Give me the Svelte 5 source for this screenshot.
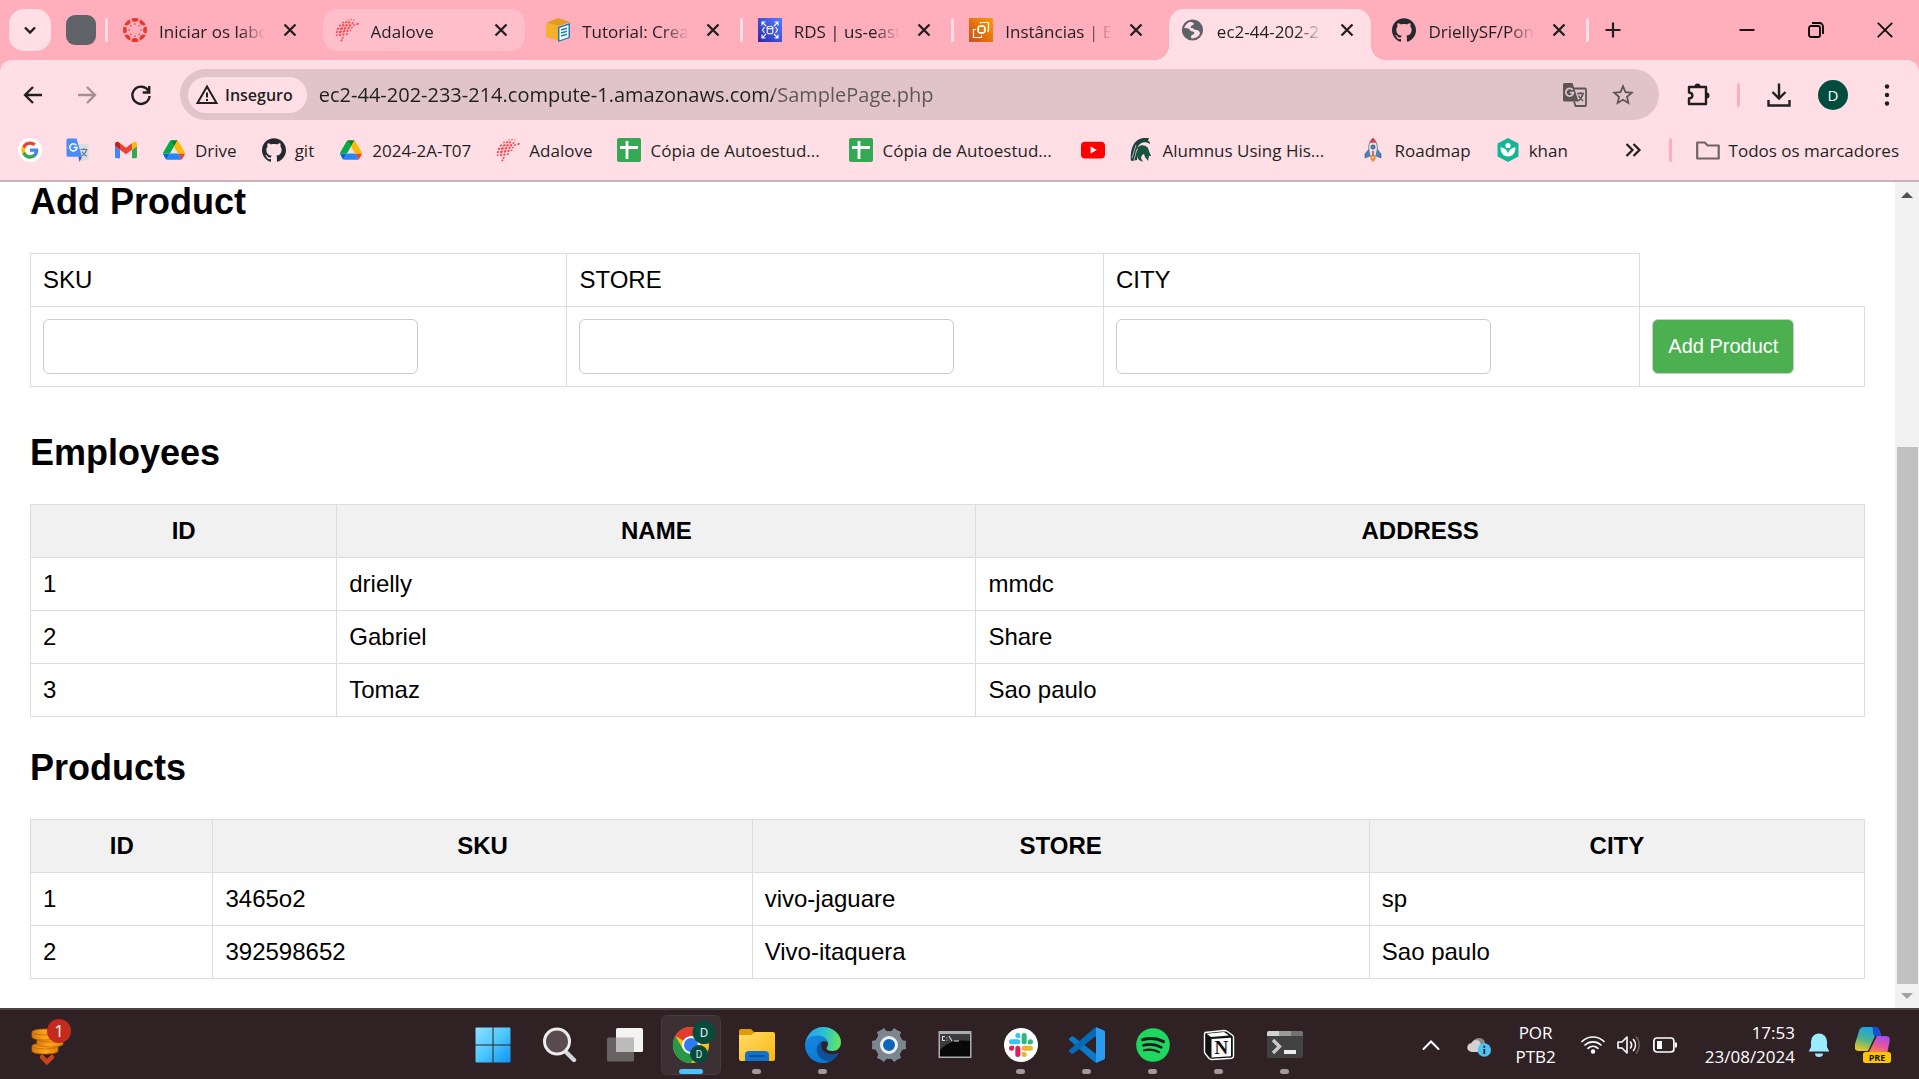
<script>
  const tabs = [
    { icon: 'canvas', title: 'Iniciar os labo' },
    { icon: 'adalove', title: 'Adalove', hover: true },
    { icon: 'tutorial', title: 'Tutorial: Crea', divider: true },
    { icon: 'rds', title: 'RDS | us-east', divider: true },
    { icon: 'ec2', title: 'Instâncias | EC' },
    { icon: 'globe', title: 'ec2-44-202-2', active: true },
    { icon: 'github', title: 'DriellySF/Pon', divider: true }
  ];

  const bookmarks = [
    { icon: 'google', label: 'Google', bare: true },
    { icon: 'translate', label: 'Google Tradutor', bare: true },
    { icon: 'gmail', label: 'Gmail', bare: true },
    { icon: 'drive', label: 'Drive' },
    { icon: 'github', label: 'git' },
    { icon: 'drive', label: '2024-2A-T07' },
    { icon: 'adalove', label: 'Adalove' },
    { icon: 'sheets', label: 'Cópia de Autoestud...', long: true },
    { icon: 'sheets', label: 'Cópia de Autoestud...', long: true },
    { icon: 'youtube', label: 'YouTube', bare: true },
    { icon: 'spartan', label: 'Alumnus Using His...', long: true },
    { icon: 'rocket', label: 'Roadmap' },
    { icon: 'khan', label: 'khan' }
  ];

  const employees = [
    [1, 'drielly', 'mmdc'],
    [2, 'Gabriel', 'Share'],
    [3, 'Tomaz', 'Sao paulo']
  ];

  const products = [
    [1, '3465o2', 'vivo-jaguare', 'sp'],
    [2, '392598652', 'Vivo-itaquera', 'Sao paulo']
  ];

  const apps = [
    { icon: 'windows', label: 'Iniciar' },
    { icon: 'search', label: 'Pesquisar' },
    { icon: 'taskview', label: 'Visão de tarefas' },
    { icon: 'chrome', label: 'Google Chrome', current: true },
    { icon: 'folder', label: 'Explorador de Arquivos', open: true },
    { icon: 'edge', label: 'Microsoft Edge', open: true },
    { icon: 'settings', label: 'Configurações' },
    { icon: 'cmd', label: 'Prompt de Comando' },
    { icon: 'slack', label: 'Slack', open: true },
    { icon: 'vscode', label: 'Visual Studio Code', open: true },
    { icon: 'spotify', label: 'Spotify', open: true },
    { icon: 'notion', label: 'Notion', open: true },
    { icon: 'terminal', label: 'Terminal', open: true }
  ];

  const fields = ['SKU', 'STORE', 'CITY'];
  const spokes = [0, 45, 90, 135, 180, 225, 270, 315];
  const cogs = [0, 60, 120, 180, 240, 300];
  // Rows of the Adalove mark: [x, y, radius]
  const dots = [
    [13, 2, 0.8], [16, 1.5, 0.9], [19, 2, 0.8],
    [8, 4.5, 1.2], [11, 4.2, 1.4], [14, 4.4, 1.5], [17.5, 5, 1.3], [22.5, 6, 1.5],
    [5, 7.5, 1.4], [8.2, 7.4, 1.6], [11.5, 7.4, 1.7], [15, 7.4, 1.6], [19, 7, 1.2],
    [3, 10.8, 1.5], [6.4, 10.6, 1.8], [10, 10.3, 1.7], [13.6, 10, 1.5], [17, 9.6, 1.1],
    [2, 14, 1.5], [5.4, 13.9, 1.8], [9, 13.4, 1.7], [12.4, 12.8, 1.5], [15.6, 12.4, 1.1],
    [1.8, 17.2, 1.2], [5, 17, 1.5], [8.4, 16.6, 1.5], [12, 16, 1.3],
    [7.6, 19.8, 1.3], [6.4, 22.4, 1.3]
  ];
</script>

{#snippet glyph(name)}
  {#if name === 'canvas'}
    <svg viewBox="0 0 24 24" aria-hidden="true">
      {#each spokes as angle}
        <g transform="rotate({angle} 12 12)" fill="#e8392b">
          <path d="M8.400 .6a12 12 0 0 1 7.200 0a3.600 3.300 0 0 1-7.200 0z" />
          <circle cx="12" cy="6" r=".8" />
        </g>
      {/each}
    </svg>
  {:else if name === 'adalove'}
    <svg viewBox="0 0 24 24" aria-hidden="true">
      {#each dots as [x, y, r]}
        <ellipse cx={x} cy={y} rx={r * 0.9} ry={r * 0.68} fill="#f9484f" transform="rotate(-35 {x} {y})" />
      {/each}
    </svg>
  {:else if name === 'tutorial'}
    <svg viewBox="0 0 24 24" aria-hidden="true">
      <path d="M0 5 12 0l12 4-11 4z" fill="#e39b1f" />
      <path d="M0 5l13 3v15L0 19z" fill="#f2b02c" />
      <path d="M12 9l12-4v15l-12 4z" fill="#1a7fb8" />
      <path d="M13.500 10l9-3v12.200l-9 3z" fill="#fff" />
      <path d="M15 12l6-1.800M15 15l6-1.800M15 18l6-1.800" stroke="#1a7fb8" stroke-width="1.500" />
    </svg>
  {:else if name === 'rds'}
    <svg viewBox="0 0 24 24" aria-hidden="true">
      <defs><linearGradient id="rds" x1="0" y1="1" x2="1" y2="0"><stop stop-color="#2e27ad" /><stop offset="1" stop-color="#527fff" /></linearGradient></defs>
      <path d="M0 0h24v24H0z" fill="url(#rds)" />
      <g fill="none" stroke="#fff" stroke-width="1.100">
        <path d="M4 7.500V4h3.500M4 4l4 4M20 7.500V4h-3.500M20 4l-4 4M4 16.500V20h3.500M4 20l4-4M20 16.500V20h-3.500M20 20l-4-4" />
        <ellipse cx="12" cy="9.500" rx="2.800" ry="1.200" />
        <path d="M9.200 9.500v5c0 1.600 5.600 1.600 5.600 0v-5M6.500 9l-2 3 2 3M17.500 9l2 3-2 3" />
      </g>
    </svg>
  {:else if name === 'ec2'}
    <svg viewBox="0 0 24 24" aria-hidden="true">
      <defs><linearGradient id="ec2" x1="0" y1="1" x2="1" y2="0"><stop stop-color="#c8511b" /><stop offset="1" stop-color="#f90" /></linearGradient></defs>
      <path d="M0 0h24v24H0z" fill="url(#ec2)" />
      <g fill="none" stroke="#fff" stroke-width="1.200">
        <path d="M9.500 8.500h6v6h-6zM11 8.500V7M12.500 8.500V7M14 8.500V7M11 16v-1.500M12.500 16v-1.500M14 16v-1.500M9.500 10H8M9.500 11.500H8M9.500 13H8M17 10h-1.500M17 11.500h-1.500M17 13h-1.500" />
        <path d="M11.500 5.500V4.500h8V13H18M7 11.500H4.500v8h8V17.500" />
      </g>
    </svg>
  {:else if name === 'globe'}
    <svg viewBox="0 0 24 24" aria-hidden="true">
      <circle cx="11.500" cy="12" r="9.500" fill="#ffdfe5" stroke="#5f6368" stroke-width="2.200" />
      <path d="M3 10c2 0 5 0 6 2s3 1 4 2-1 3-2 3-1 3-1 4.500C5 21 1 16 2 10zM9 2.500C12 1.500 18 2 20.500 8c1 3 0 6-1 8-1-2-1.500-4-4-4s-3-2-5-2 0-3 1-3 2-1 1-2-3 0-3.500-2.500z" fill="#5f6368" />
    </svg>
  {:else if name === 'github'}
    <svg viewBox="0 0 24 24" aria-hidden="true">
      <path fill="#24292f" d="M12 .297c-6.630 0-12 5.373-12 12 0 5.303 3.438 9.800 8.205 11.385.6.113.82-.258.82-.577 0-.285-.01-1.040-.015-2.040-3.338.724-4.042-1.610-4.042-1.610C4.422 18.070 3.633 17.700 3.633 17.700c-1.087-.744.084-.729.084-.729 1.205.084 1.838 1.236 1.838 1.236 1.070 1.835 2.809 1.305 3.495.998.108-.776.417-1.305.76-1.605-2.665-.3-5.466-1.332-5.466-5.930 0-1.310.465-2.380 1.235-3.220-.135-.303-.54-1.523.105-3.176 0 0 1.005-.322 3.300 1.230.96-.267 1.980-.399 3-.405 1.020.006 2.040.138 3 .405 2.280-1.552 3.285-1.230 3.285-1.230.645 1.653.24 2.873.12 3.176.765.84 1.230 1.910 1.230 3.220 0 4.610-2.805 5.625-5.475 5.920.42.36.81 1.096.81 2.220 0 1.606-.015 2.896-.015 3.286 0 .315.21.69.825.57C20.565 22.092 24 17.592 24 12.297c0-6.627-5.373-12-12-12" />
    </svg>
  {:else if name === 'google'}
    <svg viewBox="0 0 24 24" aria-hidden="true">
      <circle cx="12" cy="12" r="12" fill="#fff" />
      <g transform="translate(2.600 2.600) scale(.785)">
        <path fill="#4285f4" d="M22.560 12.250c0-.78-.07-1.530-.2-2.250H12v4.260h5.920c-.26 1.370-1.040 2.530-2.210 3.310v2.770h3.570c2.080-1.920 3.280-4.740 3.280-8.090z" />
        <path fill="#34a853" d="M12 23c2.970 0 5.460-.98 7.280-2.660l-3.570-2.770c-.98.66-2.230 1.060-3.710 1.060-2.860 0-5.290-1.930-6.160-4.530H2.180v2.840C3.990 20.530 7.700 23 12 23z" />
        <path fill="#fbbc05" d="M5.840 14.090c-.22-.66-.35-1.360-.35-2.090s.13-1.430.35-2.090V7.070H2.180C1.430 8.550 1 10.220 1 12s.43 3.450 1.180 4.930l3.660-2.840z" />
        <path fill="#ea4335" d="M12 5.380c1.620 0 3.060.56 4.210 1.640l3.150-3.150C17.450 2.090 14.970 1 12 1 7.700 1 3.990 3.470 2.180 7.070l3.660 2.840c.87-2.600 3.300-4.530 6.160-4.530z" />
      </g>
    </svg>
  {:else if name === 'translate'}
    <svg viewBox="0 0 24 24" aria-hidden="true">
      <path d="M9 6h12a1.500 1.500 0 0 1 1.500 1.500V21a1.500 1.500 0 0 1-1.500 1.500h-7z" fill="#dadce0" />
      <path d="M12.500 18.500h3.500L13.500 24z" fill="#3a57b5" />
      <path d="M2 .5h8.500L16 18.800H2A1.500 1.500 0 0 1 .5 17.300V2A1.500 1.500 0 0 1 2 .5z" fill="#4a8cf7" />
      <path d="M10.300 7.200A3.600 3.600 0 1 0 11 9.600H7.600" fill="none" stroke="#fff" stroke-width="1.500" />
      <path d="M14.500 11.500h7M18 10v1.500M20.500 11.500c-.6 3-2.500 5-4.500 6.200M16 13.500c1 2 2.600 3.600 4.600 4.600" fill="none" stroke="#5f7d8e" stroke-width="1.200" />
    </svg>
  {:else if name === 'gmail'}
    <svg viewBox="48 27 96 96" aria-hidden="true">
      <path fill="#4285f4" d="M58 108h14V74L52 59v43c0 3.320 2.690 6 6 6" />
      <path fill="#34a853" d="M120 108h14c3.320 0 6-2.690 6-6V59l-20 15" />
      <path fill="#fbbc04" d="M120 48v26l20-15v-8c0-7.420-8.470-11.650-14.400-7.200" />
      <path fill="#ea4335" d="M72 74V48l24 18 24-18v26L96 92" />
      <path fill="#c5221f" d="M52 51v8l20 15V48l-5.600-4.200c-5.940-4.450-14.400-.22-14.400 7.200" />
    </svg>
  {:else if name === 'drive'}
    <svg viewBox="-4 -8.500 95.300 95.300" aria-hidden="true">
      <path fill="#0066da" d="m6.600 66.850 3.850 6.650c.8 1.400 1.950 2.500 3.300 3.300l13.750-23.800h-27.500c0 1.550.4 3.100 1.200 4.500z" />
      <path fill="#00ac47" d="m43.650 25-13.750-23.800c-1.350.8-2.500 1.900-3.300 3.300l-25.400 44a9.060 9.060 0 0 0-1.200 4.500h27.500z" />
      <path fill="#ea4335" d="m73.550 76.800c1.350-.8 2.500-1.900 3.300-3.300l1.600-2.750 7.650-13.250c.8-1.400 1.200-2.950 1.200-4.500h-27.502l5.852 11.500z" />
      <path fill="#00832d" d="m43.650 25 13.750-23.800c-1.350-.8-2.900-1.200-4.500-1.200h-18.500c-1.600 0-3.150.45-4.500 1.200z" />
      <path fill="#2684fc" d="m59.800 53h-32.300l-13.750 23.800c1.350.8 2.900 1.200 4.500 1.200h50.800c1.600 0 3.150-.45 4.500-1.200z" />
      <path fill="#ffba00" d="m73.400 26.500-12.700-22c-.8-1.400-1.950-2.500-3.300-3.300l-13.750 23.800 16.150 28h27.450c0-1.550-.4-3.100-1.200-4.500z" />
    </svg>
  {:else if name === 'sheets'}
    <svg viewBox="0 0 24 24" aria-hidden="true">
      <rect width="24" height="24" rx="2" fill="#34a853" />
      <path d="M3 9.500h18M10 3v18" stroke="#fff" stroke-width="2.800" />
    </svg>
  {:else if name === 'youtube'}
    <svg viewBox="0 0 24 24" aria-hidden="true">
      <rect y="3.800" width="24" height="16.600" rx="4" fill="#f00" />
      <path d="M9.600 8.600v7l6.200-3.500z" fill="#fff" />
    </svg>
  {:else if name === 'spartan'}
    <svg viewBox="0 0 24 24" aria-hidden="true">
      <path d="M2 23C1 12 4 1 15 0h5l-1 3c2 1 2 1 2 3-4-3-9-2-11 1-2 2-2 4-1 7l-1 8z" fill="#18453b" />
      <path d="M9 9c3-3 8-2 10 1l1 3 2 5-2 0-1 5-3-4-1-3-2 1-1 3 2 4-4-2c-3-4-2-9-1-13z" fill="#18543f" />
      <path d="M3 20 7 7M5 22l3-11" stroke="#ffdfe5" stroke-width=".7" />
    </svg>
  {:else if name === 'rocket'}
    <svg viewBox="0 0 24 24" aria-hidden="true">
      <path d="M8 11l-4 5v4l5-2zM16 11l4 5v4l-5-2z" fill="#3b88c9" stroke="#42506a" stroke-width=".6" />
      <path d="M12 0c4 4 5 8 4 13l-1 5H9l-1-5C7 8 8 4 12 0z" fill="#dfe5ec" stroke="#5d6a80" stroke-width=".8" />
      <path d="M12 0c1.700 1.600 2.700 3.200 3.300 4.800H8.700C9.300 3.200 10.300 1.600 12 0z" fill="#d9433c" />
      <circle cx="12" cy="9" r="2" fill="#5a86b5" stroke="#42506a" stroke-width="1" />
      <path d="M11.200 13h1.600v5h-1.600z" fill="#d9433c" />
      <path d="M9.500 18.500h5c.5 2-1 4-2.500 5.500-1.500-1.500-3-3.500-2.500-5.500z" fill="#f47b2a" />
      <path d="M11 18.500h2c.2 1.400-.3 2.200-1 3-.7-.8-1.200-1.600-1-3z" fill="#ffd54a" />
    </svg>
  {:else if name === 'khan'}
    <svg viewBox="0 0 24 24" aria-hidden="true">
      <path d="M12 0 22.500 5.500v13L12 24 1.500 18.500v-13z" fill="#14b795" />
      <circle cx="12" cy="7.500" r="2.600" fill="#fff" />
      <path d="M4.500 9.500c4 0 6.500 2.500 7.500 6 1-3.500 3.500-6 7.500-6 0 6-3.500 9-7.500 9s-7.500-3-7.500-9z" fill="#fff" />
    </svg>
  {:else if name === 'windows'}
    <svg viewBox="0 0 36 36" aria-hidden="true">
      <defs><linearGradient id="win" x1="0" y1="0" x2="1" y2="1"><stop stop-color="#90e1ff" /><stop offset=".5" stop-color="#4cc7fc" /><stop offset="1" stop-color="#0a93f5" /></linearGradient></defs>
      <path fill="url(#win)" d="M1.500 .5H17.500v17H.5v-16a1 1 0 0 1 1-1zM18.500 .5h16a1 1 0 0 1 1 1v16h-17zM.5 18.500h17v17h-16a1 1 0 0 1-1-1zM18.500 18.500h17v16a1 1 0 0 1-1 1h-16z" />
    </svg>
  {:else if name === 'search'}
    <svg viewBox="0 0 36 36" aria-hidden="true">
      <path d="M25 25l8 8" stroke="#d6d6da" stroke-width="4.400" stroke-linecap="round" />
      <circle cx="16" cy="14.500" r="12.500" fill="#594b50" stroke="#ededee" stroke-width="3" />
    </svg>
  {:else if name === 'taskview'}
    <svg viewBox="0 0 36 36" aria-hidden="true">
      <rect y="10.500" width="27" height="24" rx="1.500" fill="#686263" />
      <rect x="9" y="1" width="27" height="24" rx="1.500" fill="#f3f3f3" />
      <path d="M9 10.500h18V25H10.500A1.500 1.500 0 0 1 9 23.500z" fill="#bcbabb" />
    </svg>
  {:else if name === 'chrome'}
    <svg viewBox="0 0 48 48" aria-hidden="true">
      <circle cx="24" cy="24" r="18" fill="#fbc116" />
      <path d="M24 24 8.400 15A18 18 0 0 1 39.600 15H24z" fill="#e33b2e" />
      <path d="M8.400 15A18 18 0 0 0 24 42l7.800-13.500L24 24l-7.800 4.500z" fill="#279847" />
      <circle cx="24" cy="24" r="9" fill="#fff" /><circle cx="24" cy="24" r="7" fill="#2f7cf0" />
      <circle cx="37" cy="11.500" r="11.500" fill="#064c3e" />
      <text x="37" y="16" text-anchor="middle" class="badge-text" font-size="13">D</text>
      <circle cx="32" cy="33" r="9" fill="#064c3e" />
      <text x="32" y="37" text-anchor="middle" class="badge-text" font-size="10">D</text>
    </svg>
  {:else if name === 'folder'}
    <svg viewBox="0 0 36 36" aria-hidden="true">
      <defs><linearGradient id="fold" x1="0" y1="0" x2="1" y2="1"><stop stop-color="#ffdc68" /><stop offset="1" stop-color="#fbb70f" /></linearGradient></defs>
      <path d="M0 4a2 2 0 0 1 2-2h10l4 4v8H0z" fill="#dd9b05" />
      <path d="M0 8h12l4-3h18a2 2 0 0 1 2 2v25a2 2 0 0 1-2 2H2a2 2 0 0 1-2-2z" fill="url(#fold)" />
      <path d="M6 34v-6a4 4 0 0 1 4-4h16a4 4 0 0 1 4 4v6z" fill="#1272cb" />
      <path d="M11 29h14" stroke="#08468c" stroke-width="1.500" stroke-linecap="round" />
    </svg>
  {:else if name === 'edge'}
    <svg viewBox="0 0 36 36" aria-hidden="true">
      <defs>
        <linearGradient id="edgeTop" x1="0" y1=".4" x2="1" y2=".5"><stop stop-color="#259ee8" /><stop offset=".5" stop-color="#2cc0d5" /><stop offset="1" stop-color="#66e55a" /></linearGradient>
        <linearGradient id="edgeSide" x1="0" y1="0" x2=".6" y2="1"><stop stop-color="#1686dc" /><stop offset="1" stop-color="#0b7ad6" /></linearGradient>
      </defs>
      <path d="M0 18C1 8 8 0 18 0c11 0 18 8 18 15 0 6-4 9-8.500 9-4 0-6-1.500-6-2.800 0-1 1.500-1.600 1.500-4.200 0-4-4-8-10-8C7 9 2 12 0 18z" fill="url(#edgeTop)" />
      <path d="M0 18C1 12 6 8.500 12 8.500c6 0 10 3 11 7-5-3-9 0-9 5 0 8 7 13 15 11.500A18 18 0 0 1 18 36C8 36 0 28 0 18z" fill="url(#edgeSide)" />
      <path d="M17 14.500c-4 2-6 6-5 10.500 1.500 6 7 9.500 12 9.500 4-1.300 7-4 9.500-7.500.4-.8-.3-1.200-1-.8C25 29 14 26 17 14.500z" fill="#104f99" />
    </svg>
  {:else if name === 'settings'}
    <svg viewBox="0 0 36 36" aria-hidden="true">
      <g fill="#7c868e">
        {#each cogs as angle}<path d="M12.500 8 14 .8q4 1 8 0L23.500 8z" transform="rotate({angle + 30} 18 18)" />{/each}
        <circle cx="18" cy="18" r="14" />
      </g>
      <circle cx="18" cy="18" r="7.500" fill="#0f66b8" stroke="#eceeef" stroke-width="3" />
    </svg>
  {:else if name === 'cmd'}
    <svg viewBox="0 0 36 36" aria-hidden="true">
      <path d="M1.500 4h33v27h-33z" fill="#a8aeb4" /><path d="M3 7h30v22.500H3z" fill="#080808" />
      <path d="M3 7h30v7C20 12 10 15 3 23z" fill="#3b3b3b" />
      <path d="M8 9.500H5.500v4H8M10 10.500v.8M10 12.800v.8M12 9l3 5M17 14h5" fill="none" stroke="#ddd" stroke-width="1.100" />
    </svg>
  {:else if name === 'slack'}
    <svg viewBox="0 0 36 36" aria-hidden="true">
      <circle cx="18" cy="18" r="17" fill="#fff" />
      <g transform="translate(6 6)">
        <path fill="#e01e5a" d="M5.042 15.165a2.528 2.528 0 0 1-2.520 2.523A2.528 2.528 0 0 1 0 15.165a2.527 2.527 0 0 1 2.522-2.520h2.520v2.520zM6.313 15.165a2.527 2.527 0 0 1 2.521-2.520 2.527 2.527 0 0 1 2.521 2.520v6.313A2.528 2.528 0 0 1 8.834 24a2.528 2.528 0 0 1-2.521-2.522v-6.313z" />
        <path fill="#36c5f0" d="M8.834 5.042a2.528 2.528 0 0 1-2.521-2.520A2.528 2.528 0 0 1 8.834 0a2.528 2.528 0 0 1 2.521 2.522v2.520H8.834zM8.834 6.313a2.528 2.528 0 0 1 2.521 2.521 2.528 2.528 0 0 1-2.521 2.521H2.522A2.528 2.528 0 0 1 0 8.834a2.528 2.528 0 0 1 2.522-2.521h6.312z" />
        <path fill="#2eb67d" d="M18.956 8.834a2.528 2.528 0 0 1 2.522-2.521A2.528 2.528 0 0 1 24 8.834a2.528 2.528 0 0 1-2.522 2.521h-2.522V8.834zM17.688 8.834a2.528 2.528 0 0 1-2.523 2.521 2.527 2.527 0 0 1-2.520-2.521V2.522A2.527 2.527 0 0 1 15.165 0a2.528 2.528 0 0 1 2.523 2.522v6.312z" />
        <path fill="#ecb22e" d="M15.165 18.956a2.528 2.528 0 0 1 2.523 2.522A2.528 2.528 0 0 1 15.165 24a2.527 2.527 0 0 1-2.520-2.522v-2.522h2.520zM15.165 17.688a2.527 2.527 0 0 1-2.520-2.523 2.526 2.526 0 0 1 2.520-2.520h6.313A2.527 2.527 0 0 1 24 15.165a2.528 2.528 0 0 1-2.522 2.523h-6.313z" />
      </g>
    </svg>
  {:else if name === 'vscode'}
    <svg viewBox="0 0 36 36" aria-hidden="true">
      <path d="M0 11.500 2.500 9.400q1-.5 2 .2L27 27v8.500q-1 .2-2-.8L.3 13q-.5-.8-.3-1.500z" fill="#0a7ac9" />
      <path d="M0 24.500l2.500 2.200q1 .5 2-.2L27 9V.5q-1-.2-2 .8L.3 23q-.5.8-.3 1.500z" fill="#0669b3" />
      <path d="M27 0l8 3.500q1 .6 1 1.700v25.600q0 1.100-1 1.700L27 36z" fill="#2a9df0" />
    </svg>
  {:else if name === 'spotify'}
    <svg viewBox="0 0 36 36" aria-hidden="true">
      <circle cx="18" cy="18" r="16.800" fill="#1ed760" />
      <path d="M7.500 12.700c7.500-2 15-1.300 21 2" fill="none" stroke="#1c1c1c" stroke-width="3.200" stroke-linecap="round" />
      <path d="M8.500 18.300c6.500-1.700 12.500-1 17.800 2" fill="none" stroke="#1c1c1c" stroke-width="2.600" stroke-linecap="round" />
      <path d="M9.200 23.300c5.500-1.300 10.500-.7 14.800 1.800" fill="none" stroke="#1c1c1c" stroke-width="2.200" stroke-linecap="round" />
    </svg>
  {:else if name === 'notion'}
    <svg viewBox="0 0 36 36" aria-hidden="true">
      <path d="M4 5.500 23 3.500q2 0 3 .8l5.500 4q1 .8 1 2V29q0 2-2 2.200L11 32.500q-2 0-3-1.200L4.500 27q-1-1.200-1-2.500V7z" fill="#111" stroke="#fff" stroke-width="1.400" />
      <path d="M5.500 6.700 23 5l5 3.500L10 10z" fill="#fff" /><path d="M10.500 12l19.500-1.300v18.500L10.500 30.500z" fill="#fff" />
      <text x="20.300" y="27" text-anchor="middle" class="serif" font-size="19">N</text>
    </svg>
  {:else if name === 'terminal'}
    <svg viewBox="0 0 36 36" aria-hidden="true">
      <rect y="4" width="36" height="27" rx="2" fill="#424242" />
      <path d="M2 4h10v5H0V6a2 2 0 0 1 2-2z" fill="#d0d0d0" /><path d="M12 4h12v5H12z" fill="#9b9b9b" /><path d="M24 4h10a2 2 0 0 1 2 2v3H24z" fill="#727272" />
      <path d="M6 13l6.500 6.500L6 26" fill="none" stroke="#c9c9c9" stroke-width="3.400" />
      <path d="M17 23h12v4H17z" fill="#ededed" />
    </svg>
  {/if}
{/snippet}

<div class="screen">
  <header class="browser">
    <div class="strip">
      <button class="tab-search" aria-label="Pesquisar guias">
        <svg viewBox="0 0 24 24" aria-hidden="true"><path d="M7 9.500l5 5 5-5" fill="none" stroke="#1f1f1f" stroke-width="2.400" /></svg>
      </button>
      <button class="group" aria-label="Grupo de guias"></button>
      <span class="rule first"></span>
      <div class="tabs">
        {#each tabs as tab}
          <div class="cell">
            <div class="tab" class:hover={tab.hover} class:active={tab.active}>
              <span class="icon">{@render glyph(tab.icon)}</span>
              <span class="title">{tab.title}</span>
              <button class="close" aria-label="Fechar guia">
                <svg viewBox="0 0 24 24" aria-hidden="true"><path d="M6.500 6.500l11 11M17.500 6.500l-11 11" stroke="#1f1f1f" stroke-width="2.300" /></svg>
              </button>
            </div>
            <span class="rule" class:clear={!tab.divider}></span>
          </div>
        {/each}
      </div>
      <button class="new-tab" aria-label="Nova guia">
        <svg viewBox="0 0 24 24" aria-hidden="true"><path d="M12 4.500v15M4.500 12h15" stroke="#1f1f1f" stroke-width="2.200" /></svg>
      </button>
      <div class="window-buttons">
        <button aria-label="Minimizar"><svg viewBox="0 0 24 24" aria-hidden="true"><path d="M4.500 12h15" stroke="#000" stroke-width="1.800" /></svg></button>
        <button aria-label="Restaurar"><svg viewBox="0 0 24 24" aria-hidden="true"><g fill="none" stroke="#000" stroke-width="1.800"><rect x="5" y="8" width="11" height="11" rx="2" /><path d="M8 5h7.500A3.500 3.500 0 0 1 19 8.500V16" /></g></svg></button>
        <button aria-label="Fechar"><svg viewBox="0 0 24 24" aria-hidden="true"><path d="M4.800 4.800l14.400 14.400M19.200 4.800 4.800 19.200" stroke="#000" stroke-width="1.700" /></svg></button>
      </div>
    </div>

    <div class="toolbar">
      <nav class="nav" aria-label="Navegação">
        <button aria-label="Voltar"><svg viewBox="0 0 24 24" aria-hidden="true"><path d="M21 12H4.500M12 4l-8 8 8 8" fill="none" stroke="#1f1f1f" stroke-width="2.300" /></svg></button>
        <button aria-label="Avançar" disabled><svg viewBox="0 0 24 24" aria-hidden="true"><path d="M3 12h16.500M12 4l8 8-8 8" fill="none" stroke="#a58d95" stroke-width="2.300" /></svg></button>
        <button aria-label="Recarregar"><svg viewBox="0 0 24 24" aria-hidden="true"><path d="M19.500 8A8.600 8.600 0 1 0 20.600 13M20.200 3v6.500h-6.500" fill="none" stroke="#1f1f1f" stroke-width="2.400" /></svg></button>
      </nav>
      <form class="omnibox">
        <button type="button" class="chip">
          <svg viewBox="0 0 24 24" aria-hidden="true"><path d="M12 3.500 21.500 20h-19z" fill="none" stroke="#1f1f1f" stroke-width="2" /><path d="M12 9.500v5M12 16v2" stroke="#1f1f1f" stroke-width="2" /></svg>
          Inseguro
        </button>
        <input class="address" aria-label="Endereço" value="ec2-44-202-233-214.compute-1.amazonaws.com/SamplePage.php" />
        <button type="button" class="tool" aria-label="Traduzir esta página">
          <svg viewBox="0 0 24 24" aria-hidden="true">
            <path d="M9 5.500h13a1 1 0 0 1 1 1V22a1 1 0 0 1-1 1h-9.500L11 18.500" fill="none" stroke="#5c5558" stroke-width="1.800" />
            <path d="M1.500 0H9.500l6 18.500H1.500A1.500 1.500 0 0 1 0 17V1.500A1.500 1.500 0 0 1 1.500 0z" fill="#5c5558" />
            <path d="M9.700 7A3.800 3.800 0 1 0 10.400 9.700H7" fill="none" stroke="#e0c4ca" stroke-width="1.700" />
            <path d="M14 10.500h7M17.500 9v1.500M20 10.500c-.6 3-2.300 5.500-4.800 7.500M15.500 12.500c1.300 2.500 2.800 4.300 4.600 5.500" fill="none" stroke="#5c5558" stroke-width="1.500" />
          </svg>
        </button>
        <button type="button" class="tool" aria-label="Adicionar aos favoritos">
          <svg viewBox="1 1 22 22" aria-hidden="true"><path fill="#5c5558" d="M22 9.240l-7.190-.62L12 2 9.190 8.630 2 9.240l5.460 4.730L5.820 21 12 17.270 18.180 21l-1.630-7.030L22 9.240zM12 15.400l-3.760 2.270 1-4.280-3.320-2.880 4.380-.38L12 6.100l1.710 4.040 4.380.38-3.320 2.880 1 4.280L12 15.400z" /></svg>
        </button>
      </form>
      <div class="actions">
        <button aria-label="Extensões"><svg viewBox="0 0 24 24" aria-hidden="true"><path d="M3 4h17v17H3v-5.500c4.500-.5 4.500-5.500 0-6z" fill="none" stroke="#1f1f1f" stroke-width="2.400" stroke-linejoin="round" /><path d="M8.500 3.500a3 3 0 0 1 6 0zM20.500 9.500a3 3 0 0 1 0 6z" fill="#1f1f1f" /></svg></button>
        <span class="rule pink"></span>
        <button aria-label="Downloads"><svg viewBox="0 0 24 24" aria-hidden="true"><path d="M12 .5v14M5.500 9l6.500 6.500L18.500 9" fill="none" stroke="#1f1f1f" stroke-width="2.400" /><path d="M1.500 17v5.500h21V17" fill="none" stroke="#1f1f1f" stroke-width="2.400" /></svg></button>
        <button class="avatar" aria-label="Perfil">D</button>
        <button aria-label="Menu"><svg viewBox="0 0 24 24" aria-hidden="true"><g fill="#1f1f1f"><circle cx="12" cy="3.500" r="2.200" /><circle cx="12" cy="12" r="2.200" /><circle cx="12" cy="20.500" r="2.200" /></g></svg></button>
      </div>
    </div>

    <nav class="bookmarks" aria-label="Favoritos">
      {#each bookmarks as mark}
        <a href="#bookmark" aria-label={mark.label}>
          <span class="icon">{@render glyph(mark.icon)}</span>
          {#if !mark.bare}<span class="label" class:long={mark.long}>{mark.label}</span>{/if}
        </a>
      {/each}
      <div class="more">
        <button aria-label="Mais favoritos"><svg viewBox="0 0 24 24" aria-hidden="true"><path d="M5.500 6l6 6-6 6M12.500 6l6 6-6 6" fill="none" stroke="#1f1f1f" stroke-width="2.200" /></svg></button>
        <span class="rule pink"></span>
        <a href="#all">
          <span class="icon"><svg viewBox="0 0 24 24" aria-hidden="true"><path d="M1.200 4.500h7.500l3 3h11v13H1.200z" fill="none" stroke="#6e6367" stroke-width="2.200" stroke-linejoin="round" /></svg></span>
          <span>Todos os marcadores</span>
        </a>
      </div>
    </nav>
  </header>

  <div class="viewport">
    <main>
      <h2>Add Product</h2>
      <form>
        <table class="entry">
          <tbody>
            <tr>
              {#each fields as field}
                <td><label for={field}>{field}</label></td>
              {/each}
            </tr>
            <tr>
              {#each fields as field}
                <td><input id={field} name={field} type="text" /></td>
              {/each}
              <td><button class="submit" type="button">Add Product</button></td>
            </tr>
          </tbody>
        </table>
      </form>

      <h2>Employees</h2>
      <table class="employees">
        <thead><tr><th>ID</th><th>NAME</th><th>ADDRESS</th></tr></thead>
        <tbody>
          {#each employees as row}
            <tr>{#each row as value}<td>{value}</td>{/each}</tr>
          {/each}
        </tbody>
      </table>

      <h2>Products</h2>
      <table class="products">
        <thead><tr><th>ID</th><th>SKU</th><th>STORE</th><th>CITY</th></tr></thead>
        <tbody>
          {#each products as row}
            <tr>{#each row as value}<td>{value}</td>{/each}</tr>
          {/each}
        </tbody>
      </table>
    </main>
    <div class="scrollbar">
      <svg viewBox="0 0 24 24" aria-hidden="true"><path d="M6 16l6-6 6 6z" fill="#505050" /></svg>
      <span class="thumb"></span>
      <svg viewBox="0 0 24 24" aria-hidden="true"><path d="M6 9l6 6 6-6z" fill="#a3a3a3" /></svg>
    </div>
  </div>

  <footer class="taskbar">
    <button class="widget" aria-label="Widgets">
      <svg viewBox="0 0 48 48" aria-hidden="true">
        <defs><linearGradient id="coin" x1="0" x2="1"><stop stop-color="#d87708" /><stop offset=".5" stop-color="#ffa51f" /><stop offset="1" stop-color="#e37e09" /></linearGradient></defs>
        <path d="M18 36l5 5 5-5" fill="none" stroke="#cd4416" stroke-width="4.500" stroke-linecap="round" />
        <g fill="url(#coin)" stroke="#b86205" stroke-width=".7">
          <path d="M8 25v5c0 4 26 4 26 0v-5z" /><ellipse cx="21" cy="25" rx="13" ry="3" />
          <path d="M13 18v5c0 4 26 4 26 0v-5z" /><ellipse cx="26" cy="18" rx="13" ry="3" />
          <path d="M8 11v5c0 4 26 4 26 0v-5z" /><ellipse cx="21" cy="11" rx="13" ry="3" />
        </g>
      </svg>
      <span class="count">1</span>
    </button>
    <div class="apps">
      {#each apps as app}
        <button class="app" class:current={app.current} class:open={app.open} aria-label={app.label}>
          {@render glyph(app.icon)}
        </button>
      {/each}
    </div>
    <div class="tray">
      <button class="small" aria-label="Mostrar ícones ocultos"><svg viewBox="0 0 24 24" aria-hidden="true"><path d="M4.500 16 12 8.500l7.500 7.500" fill="none" stroke="#fff" stroke-width="2" stroke-linecap="round" /></svg></button>
      <button class="small cloud" aria-label="OneDrive">
        <svg viewBox="0 0 24 24" aria-hidden="true">
          <path d="M6 10a6 5 0 0 1 12 0v6H8z" fill="#8c8788" /><path d="M5 19a4.500 4.500 0 0 1-.5-9C6 6 12 6 13.500 10v9z" fill="#d3d1d2" />
          <circle cx="17.300" cy="17" r="6.700" fill="#4fc3f7" /><path d="M17.300 16v5M17.300 12.800v2" stroke="#222" stroke-width="1.800" />
        </svg>
      </button>
      <button class="lang"><span>POR</span><span>PTB2</span></button>
      <button class="status" aria-label="Rede, som e bateria">
        <svg viewBox="0 0 24 24" aria-hidden="true"><g fill="none" stroke="#fff" stroke-width="1.700" stroke-linecap="round"><path d="M1 8.500c6-6 16-6 22 0" /><path d="M4 12c4.500-4.300 11.500-4.300 16 0" /><path d="M7 15.300c3-2.700 7-2.700 10 0" /></g><circle cx="12" cy="18.500" r="2.200" fill="#fff" /></svg>
        <svg viewBox="0 0 24 24" aria-hidden="true"><g fill="none" stroke="#fff" stroke-width="1.600" stroke-linecap="round" stroke-linejoin="round"><path d="M1 9h4l5-5v16l-5-5H1z" /><path d="M13.500 9a5 5 0 0 1 0 6M16.500 6.500a9 9 0 0 1 0 11" /><path d="M19.500 4a13 13 0 0 1 0 16" stroke="#6d6265" /></g></svg>
        <svg viewBox="0 0 24 24" aria-hidden="true"><rect x=".9" y="5" width="20" height="14" rx="3" fill="none" stroke="#fff" stroke-width="1.700" /><path d="M4 8h5v8H4zM22 9.500h1a1 1 0 0 1 1 1v3a1 1 0 0 1-1 1h-1z" fill="#fff" /></svg>
      </button>
      <button class="clock"><time>17:53</time><time>23/08/2024</time></button>
      <button class="small bell" aria-label="Notificações"><svg viewBox="0 0 24 24" aria-hidden="true"><path d="M12 .5a8 8 0 0 1 8 8V14l2.300 4.500H1.700L4 14V8.500a8 8 0 0 1 8-8zM8 20.500h8a4 3.500 0 0 1-8 0z" fill="#99ebff" /></svg></button>
      <button class="copilot" aria-label="Copilot">
        <svg viewBox="0 0 36 36" aria-hidden="true">
          <defs>
            <linearGradient id="copA" x1=".5" y1="0" x2=".2" y2="1"><stop stop-color="#1aa3ef" /><stop offset=".5" stop-color="#4cb38e" /><stop offset="1" stop-color="#f3c81c" /></linearGradient>
            <linearGradient id="copB" x1=".7" y1="0" x2=".3" y2="1"><stop stop-color="#a44df0" /><stop offset=".5" stop-color="#e4569e" /><stop offset="1" stop-color="#ff8a3c" /></linearGradient>
          </defs>
          <path d="M9 0h11c4 0 5 4 6 9h-6L13 24H4c-4 0-5-3-4-7L4 4c1-3 2-4 5-4z" fill="url(#copA)" />
          <path d="M17 0h3c4 0 5 4 6 9h-6c-3 0-1-6-3-9z" fill="#174fd0" />
          <path d="M22 9h9c4 0 4 3 3.500 6L32 27H13z" fill="url(#copB)" />
          <rect x="8" y="25" width="28" height="11" rx="2.500" fill="#ffc400" />
          <text x="22" y="34" text-anchor="middle" class="pre" font-size="9">PRE</text>
        </svg>
      </button>
    </div>
  </footer>
</div>

<style>
  :global(body) {
    margin: 0;
    background: #fff;
  }
  .screen,
  .screen :global(*) {
    box-sizing: border-box;
  }
  .screen {
    display: flex;
    flex-direction: column;
    min-height: 100vh;
    font-family: 'Open Sans', 'Noto Sans', sans-serif;
    font-size: 17px;
    color: #1f1f1f;
  }
  button {
    display: flex;
    align-items: center;
    justify-content: center;
    padding: 0;
    border: 0;
    background: none;
    color: inherit;
    font: inherit;
  }
  svg {
    display: block;
    width: 24px;
    height: 24px;
    flex: none;
  }
  .icon {
    flex: none;
  }
  .rule {
    flex: none;
    width: 3px;
    height: 24px;
    border-radius: 2px;
    background: #ffdfe5;
  }
  .rule.pink {
    background: #ffaebc;
  }
  .rule.clear {
    background: none;
  }

  .browser {
    background: #ffaebc;
    border-bottom: 2px solid #cbb2b9;
  }
  .strip {
    display: flex;
    align-items: center;
    height: 60px;
    padding-left: 9px;
  }
  .tab-search {
    width: 42px;
    height: 42px;
    border-radius: 15px;
    background: #ffdfe5;
  }
  .group {
    width: 30px;
    height: 30px;
    margin: 0 9px 0 15px;
    border-radius: 9px;
    background: #5f6368;
  }
  .first {
    margin-right: 3px;
  }
  .tabs {
    display: grid;
    grid-template-columns: repeat(7, 1fr);
    flex: 0 1 1481px;
  }
  .cell {
    display: flex;
    align-items: center;
    gap: 3px;
    padding-right: 3px;
    min-width: 0;
  }
  .tab {
    display: flex;
    align-items: center;
    flex: 1;
    min-width: 0;
    height: 42px;
    padding: 0 12px;
    border-radius: 15px;
  }
  .tab.hover {
    background: #ffbfca;
  }
  .tab.active {
    position: relative;
    height: 51px;
    margin-bottom: -9px;
    padding-bottom: 9px;
    border-radius: 15px 15px 0 0;
    background: #ffdfe5;
  }
  .tab.active::before,
  .tab.active::after {
    content: '';
    position: absolute;
    bottom: 0;
    width: 15px;
    height: 15px;
  }
  .tab.active::before {
    right: 100%;
    background: radial-gradient(circle at 0 0, transparent 15px, #ffdfe5 15px);
  }
  .tab.active::after {
    left: 100%;
    background: radial-gradient(circle at 100% 0, transparent 15px, #ffdfe5 15px);
  }
  .title {
    flex: 1;
    min-width: 0;
    margin: 0 12px;
    padding-top: 2px;
    overflow: hidden;
    white-space: nowrap;
    mask-image: linear-gradient(to right, #000 75%, transparent);
  }
  .new-tab {
    margin-left: 9px;
  }
  .window-buttons {
    display: flex;
    margin-left: auto;
  }
  .window-buttons button {
    width: 69px;
    height: 58px;
  }

  .toolbar {
    display: flex;
    align-items: center;
    gap: 27px;
    padding: 9px 20px 9px 21px;
    border-radius: 12px 12px 0 0;
    background: #ffdfe5;
  }
  .nav {
    display: flex;
    gap: 30px;
  }
  .omnibox {
    display: flex;
    align-items: center;
    flex: 1;
    gap: 24px;
    height: 51px;
    padding: 0 24px 0 8px;
    border-radius: 26px;
    background: #e0c4ca;
  }
  .chip {
    gap: 6px;
    height: 36px;
    padding: 0 14px 0 7px;
    border-radius: 18px;
    background: #ffdfe5;
    font-size: 16px;
    font-weight: 600;
  }
  .address {
    flex: 1;
    min-width: 0;
    margin-left: -12px;
    padding: 0;
    border: 0;
    outline: 0;
    font: inherit;
    font-size: 20px;
    background: linear-gradient(to right, #1f1f1f 454px, #5f5559 454px);
    background-clip: text;
    -webkit-text-fill-color: transparent;
  }
  .actions {
    display: flex;
    align-items: center;
    gap: 27px;
  }
  .avatar {
    width: 30px;
    height: 30px;
    border-radius: 50%;
    background: #004d40;
    color: #fff;
    font-size: 15px;
  }

  .bookmarks {
    display: flex;
    align-items: center;
    gap: 24px;
    height: 51px;
    padding: 0 20px 9px 18px;
    background: #ffdfe5;
    white-space: nowrap;
  }
  .bookmarks a {
    display: flex;
    align-items: center;
    gap: 9px;
    color: inherit;
    text-decoration: none;
  }
  .label {
    padding-right: 1px;
  }
  .long {
    width: 175px;
  }
  .more {
    display: flex;
    align-items: center;
    gap: 24px;
    margin-left: auto;
  }

  .viewport {
    display: flex;
    flex: 1;
    background: #fff;
    color: #000;
    font-family: 'Liberation Sans', Arial, sans-serif;
    font-size: 24px;
    line-height: 28px;
  }
  main {
    flex: 1;
    padding: 0 30px;
  }
  h2 {
    margin: 0 0 32px;
    font-size: 36px;
    line-height: 39px;
  }
  form + h2 {
    margin-top: 46px;
  }
  table + h2 {
    margin-top: 31px;
  }
  table {
    width: 100%;
    table-layout: fixed;
    border-collapse: collapse;
  }
  th,
  td {
    padding: 12px;
    border: 1px solid #ddd;
  }
  td {
    text-align: left;
  }
  th {
    background: #f1f1f1;
  }
  .entry td {
    width: 29.25%;
  }
  .entry td:nth-child(4) {
    width: 12.25%;
  }
  .employees th:nth-child(1) {
    width: 16.7%;
  }
  .employees th:nth-child(2) {
    width: 34.85%;
  }
  .products th:nth-child(1) {
    width: 9.95%;
  }
  .products th:nth-child(2) {
    width: 29.4%;
  }
  .products th:nth-child(3) {
    width: 33.65%;
  }
  td input,
  .submit {
    display: block;
    height: 55px;
    border: 1px solid #ccc;
    border-radius: 6px;
    font: 20px 'Liberation Sans', Arial, sans-serif;
    white-space: nowrap;
  }
  td input {
    width: 375px;
    max-width: 100%;
    padding: 0 15px;
  }
  .submit {
    padding: 0 15px;
    background: #4caf50;
    color: #fff;
  }
  .scrollbar {
    display: grid;
    grid-template-rows: 24px 1fr 24px;
    width: 24px;
    background: #f1f1f1;
  }
  .thumb {
    align-self: end;
    height: 69%;
    margin: 0 1px 0 2px;
    background: #c1c1c1;
  }

  .taskbar {
    display: grid;
    grid-template-columns: 463fr auto 604fr;
    align-items: center;
    height: 71px;
    border-top: 2px solid #4a4245;
    background: #302125;
    color: #fff;
    font-size: 17px;
    line-height: 24px;
  }
  .widget {
    position: relative;
    width: 48px;
    margin-left: 24px;
  }
  .widget svg {
    width: 48px;
    height: 48px;
  }
  .count {
    position: absolute;
    top: -2px;
    right: 1px;
    width: 24px;
    height: 24px;
    border-radius: 50%;
    background: #c42b1c;
  }
  .apps {
    display: flex;
    gap: 6px;
  }
  .app {
    position: relative;
    width: 60px;
    height: 60px;
    border-radius: 6px;
  }
  .app svg {
    width: 36px;
    height: 36px;
  }
  .app.current {
    border: 1px solid #463a3e;
    background: #3d3034;
  }
  .app.current svg {
    width: 48px;
    height: 48px;
  }
  .open::after,
  .current::after {
    content: '';
    position: absolute;
    bottom: 1px;
    left: 50%;
    width: 9px;
    height: 5px;
    margin-left: -5px;
    border-radius: 3px;
    background: #a09a9c;
  }
  .current::after {
    bottom: 0;
    width: 24px;
    margin-left: -12px;
    background: #4cc2ff;
  }
  .tray {
    display: flex;
    align-items: center;
    justify-content: flex-end;
    padding-right: 28px;
  }
  .cloud {
    margin: 0 24px;
  }
  .lang,
  .clock {
    flex-direction: column;
  }
  .lang {
    margin-right: 25px;
  }
  .status {
    gap: 12px;
    margin-right: 28px;
  }
  .clock {
    align-items: flex-end;
  }
  .bell {
    margin: 0 24px 0 12px;
  }
  .copilot svg {
    width: 36px;
    height: 36px;
  }
  .badge-text {
    fill: #dfe9e7;
    font-family: Roboto, sans-serif;
  }
  .serif {
    font-family: 'Liberation Serif', serif;
    font-weight: 700;
    fill: #111;
  }
  .pre {
    font-family: 'Open Sans', sans-serif;
    font-weight: 700;
    fill: #111;
  }
</style>
